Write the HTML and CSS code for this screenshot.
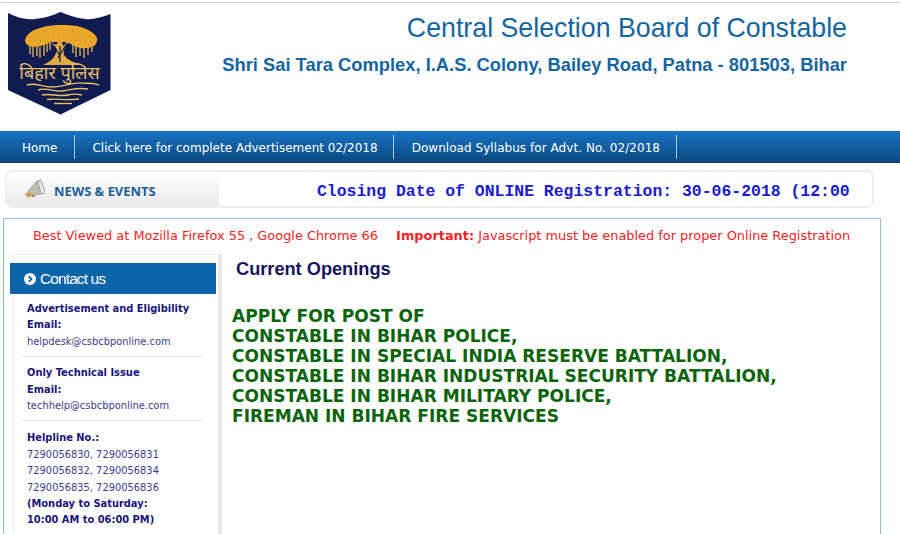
FILE: index.html
```html
<!DOCTYPE html>
<html lang="en">
<head>
<meta charset="utf-8">
<title>Central Selection Board of Constable</title>
<link rel="stylesheet" href="styles.css">
</head>
<body>
<header class="header">
  <svg class="logo" viewBox="8 11 104 104" width="104" height="104" aria-label="Bihar Police">
    <path d="M8 13 C18 18 26 20 35 19 C45 18 54 15 60.500 12 C68 15 76 18 85 19 C93 20 102 17 110.500 14 L110.500 90 L60.500 114.500 L8 90 Z" fill="#101b50"/>
    <path d="M25 40 C27 33 33 30 40 28 C48 25 56 25 64 25 C74 25 84 27 90 31 C95 34 98 37 97 41 C96 46 92 48 86 48 C80 49 76 47 71 44 L64 42 L52 42 C46 44 40 47 35 47 C30 47 25 45 25 40 Z" fill="#e9a72b"/>
    <path class="speck" d="M33 36h60M30 41h62M42 30h40"/>
    <path class="roots" d="M30 46v8M33 47v10M37 47v9M40 47v11M44 45v11M47 44v8M50 43v7M73 45v8M76 46v11M80 48v8M84 48v10M88 48v7M92 47v5"/>
    <path class="trunk" d="M43 65 C50 62 55 58 57 50 C56 47 53 44 50 42 L56 45 L58 42 L62 42 L63 46 L68 42 C65 46 63 50 64 55 C67 60 75 63 82 65 Z"/>
    <path d="M54 46 L60 56 M66 45 L58 58 M60 46 V62" stroke="#101b50" stroke-width="1.200" fill="none"/>
    <text class="logo-text" x="59.500" y="79" text-anchor="middle">बिहार पुलिस</text>
    <path class="wave" d="M27 85 C35 82 42 87 52 87 C65 87 72 82 82 83 C88 83 94 83 99 85"/>
    <path class="wave" d="M38 90 C46 87 54 92 62 91 C70 90 78 87 88 89"/>
    <path class="wave" d="M42 95 C50 93 60 97 68 95 C72 94 78 94 82 95"/>
    <path class="wave" d="M47 99.500 C55 98 65 101 79 99"/>
    <path class="wave" d="M54 103.500 L72 103.500"/>
  </svg>
  <div class="org">
    <h1 class="org-name">Central Selection Board of Constable</h1>
    <p class="org-addr">Shri Sai Tara Complex, I.A.S. Colony, Bailey Road, Patna - 801503, Bihar</p>
  </div>
</header>

<nav class="nav">
  <a class="nav-item nav-home" href="#">Home</a>
  <a class="nav-item nav-advert" href="#">Click here for complete Advertisement 02/2018</a>
  <a class="nav-item nav-syllabus" href="#">Download Syllabus for Advt. No. 02/2018</a>
</nav>

<section class="news">
  <div class="news-label">
    <svg class="horn" viewBox="0 0 22 20" width="22" height="20">
      <path d="M4 12 L13 2 L17 1 L21 14 L17 15 L6 16 Z" fill="#bdbdb2" stroke="#8f8f86" stroke-width=".7"/>
      <path d="M14 2 L17 1 L21 14 L17 15 Z" fill="#ecece6" stroke="#9a9a90" stroke-width=".7"/>
      <path d="M1 15 L5 12 L8 16 L4 19 Z" fill="#c9a45c"/>
      <path d="M6 16 L11 15.500 L11 18 L8 18 Z" fill="#b8954e"/>
    </svg>
    <span class="news-title">NEWS &amp; EVENTS</span>
  </div>
  <div class="ticker"><span class="ticker-text">Closing Date of ONLINE Registration: 30-06-2018 (12:00 Noon)</span></div>
</section>

<main class="main">
  <p class="notice">Best Viewed at Mozilla Firefox 55 , Google Chrome 66 <b class="notice-gap">Important:</b> Javascript must be enabled for proper Online Registration</p>
  <div class="columns">
    <aside class="sidebar">
      <h2 class="contact-head"><span class="bullet"><svg viewBox="0 0 12 12" width="12" height="12"><circle cx="6" cy="6" r="6" fill="#fff"/><path d="M4.700 3.200 L7.500 6 L4.700 8.800" stroke="#0a64a8" stroke-width="1.800" fill="none"/></svg></span>Contact us</h2>
      <div class="contact-group">
        <p class="line strong">Advertisement and Eligibility</p>
        <p class="line strong">Email:</p>
        <p class="line">helpdesk@csbcbponline.com</p>
      </div>
      <div class="contact-group">
        <p class="line strong">Only Technical Issue</p>
        <p class="line strong">Email:</p>
        <p class="line">techhelp@csbcbponline.com</p>
      </div>
      <div class="contact-group last">
        <p class="line strong">Helpline No.:</p>
        <p class="line">7290056830, 7290056831</p>
        <p class="line">7290056832, 7290056834</p>
        <p class="line">7290056835, 7290056836</p>
        <p class="line strong">(Monday to Saturday:</p>
        <p class="line strong">10:00 AM to 06:00 PM)</p>
      </div>
    </aside>
    <article class="content">
      <h2 class="content-title">Current Openings</h2>
      <p class="openings">APPLY FOR POST OF<br>CONSTABLE IN BIHAR POLICE,<br>CONSTABLE IN SPECIAL INDIA RESERVE BATTALION,<br>CONSTABLE IN BIHAR INDUSTRIAL SECURITY BATTALION,<br>CONSTABLE IN BIHAR MILITARY POLICE,<br>FIREMAN IN BIHAR FIRE SERVICES</p>
    </article>
  </div>
</main>
</body>
</html>
```
FILE: styles.css
```css
html, body { margin: 0; padding: 0; height: 534px; overflow: hidden; background: #fff; }
body { font-family: "DejaVu Sans", Verdana, sans-serif; box-sizing: border-box; padding-top: 2px; }
h1, h2, p { margin: 0; }

.header { height: 129px; display: flex; justify-content: space-between; padding: 8px 53px 0 8px; box-sizing: border-box; border-top: 1px solid #cfcfcf; }
.logo { display: block; flex: none; }
.logo-text { font-family: "Noto Sans", "DejaVu Sans", sans-serif; font-size: 18px; fill: #e8c068; }
.speck { stroke: #c98a1c; stroke-width: 1; stroke-dasharray: 1 4; fill: none; }
.roots { stroke: #e6b95c; stroke-width: 1.300; fill: none; }
.trunk { fill: #e3ad45; }
.wave { stroke: #e8c068; stroke-width: 1.400; fill: none; }
.org { text-align: right; }
.org-name { font-family: "Liberation Sans", Arial, sans-serif; font-weight: 400; font-size: 26.750px; line-height: 30px; color: #15659f; margin-top: 2px; }
.org-addr { font-family: "Liberation Sans", Arial, sans-serif; font-weight: 700; font-size: 18.330px; line-height: 22px; color: #15659f; margin-top: 11px; }

.nav { height: 32px; display: flex; align-items: stretch; background: linear-gradient(#1874c2, #0f5a9b 60%, #0a4a80); border-bottom: 1px solid #0a3f6e; box-sizing: border-box; padding-left: 5px; }
.nav-item { color: #fff; text-decoration: none; font-size: 12px; padding: 2px 16px 0 17px; border-right: 1px solid #a9c8e2; margin: 4px 0 3px; line-height: 23px; }
.nav-home { padding-right: 17px; }
.nav-advert { padding-right: 15px; }
.nav-syllabus { padding-left: 18px; letter-spacing: .05px; }

.news { margin: 7px 26px 0 5px; height: 38px; display: flex; border: 2px solid #eeeeee; border-radius: 7px; box-sizing: border-box; overflow: hidden; background: #fff; }
.news-label { width: 212px; flex: none; display: flex; align-items: center; background: linear-gradient(#fff, #e9e9ec); border-radius: 0 8px 0 0; padding: 3px 0 0 17px; box-sizing: border-box; gap: 8px; }
.horn { display: block; flex: none; margin-top: -3px; }
.news-title { color: #1d5e97; font-size: 12.900px; font-weight: 700; font-family: "Open Sans", "DejaVu Sans", sans-serif; }
.ticker { flex: 1; overflow: hidden; white-space: nowrap; margin: 0 13px 0 98px; line-height: 38px; }
.ticker-text { font-family: "Liberation Mono", "Courier New", monospace; font-weight: 700; font-size: 16.450px; color: #1a1ad2; }

.main { margin: 10px 19px 0 3px; border: 1px solid #8fbce0; height: 320px; box-sizing: border-box; overflow: hidden; }
.notice { text-align: center; color: #f02424; font-size: 12.900px; line-height: 16px; padding: 9px 1px 0 0; height: 35px; box-sizing: border-box; white-space: nowrap; }
.notice-gap { margin-left: 14px; }
.columns { display: flex; }
.sidebar { width: 209px; margin-left: 9px; flex: none; box-sizing: border-box; border-top: 1px solid #eeeeee; border-right: 4px solid #e6e6e6; padding-top: 8px; height: 300px; border-left: 1px solid #eee; }
.contact-head { background: #0a64a8; color: #fff; font-family: "Liberation Sans", Arial, sans-serif; font-weight: 400; font-size: 15.500px; letter-spacing: -.9px; line-height: 31px; height: 31px; margin: 0 2px -1px -4px; display: flex; align-items: center; gap: 4px; padding-left: 14px; }
.bullet { display: flex; }
.contact-group { margin: 8px 14px 0 9px; border-bottom: 1px solid #e6e6e6; padding: 0 0 6px 4px; }
.contact-group.last { border: 0; margin-top: 9px; }
.line { font-size: 9.900px; line-height: 16.400px; color: #3c3a8c; white-space: nowrap; }
.strong { font-weight: 700; color: #1a1478; }
.content { flex: 1; padding-left: 10px; }
.content-title { font-family: "Liberation Sans", Arial, sans-serif; font-weight: 700; font-size: 18.200px; line-height: 22px; color: #14145c; margin: 4px 0 0 4px; }
.openings { font-family: "DejaVu Sans", sans-serif; font-weight: 700; font-size: 17.050px; line-height: 20px; color: #0b640b; margin-top: 26px; }
```
